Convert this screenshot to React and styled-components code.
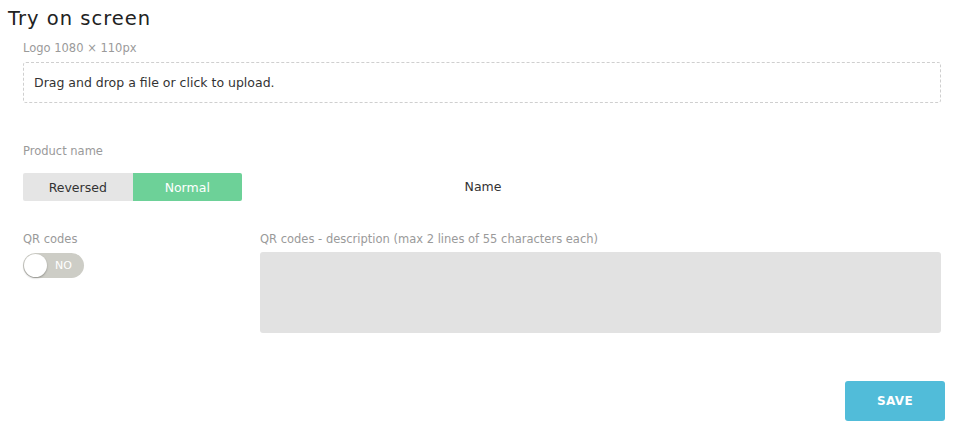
import styled, { createGlobalStyle } from "styled-components";

const GlobalStyle = createGlobalStyle`
    body {
        margin: 0;
        background: #fff;
        font-family: "DejaVu Sans", "Open Sans", sans-serif;
        color: #333;
    }
`

export default function App(){
    return(
        <Page>
            <GlobalStyle />
            <Title>Try on screen</Title>
            <Content>
                <Field>
                    <Label>Logo 1080 × 110px</Label>
                    <DropZone>Drag and drop a file or click to upload.</DropZone>
                </Field>

                <ProductRow>
                    <Field>
                        <Label>Product name</Label>
                        <Segmented>
                            <Segment>Reversed</Segment>
                            <Segment active>Normal</Segment>
                        </Segmented>
                    </Field>
                    <NamePreview>Name</NamePreview>
                </ProductRow>

                <QrRow>
                    <Field>
                        <Label>QR codes</Label>
                        <Toggle>
                            <Knob />
                            <ToggleText>NO</ToggleText>
                        </Toggle>
                    </Field>
                    <Field>
                        <Label>QR codes - description (max 2 lines of 55 characters each)</Label>
                        <TextArea />
                    </Field>
                </QrRow>

                <Footer>
                    <SaveButton>SAVE</SaveButton>
                </Footer>
            </Content>
        </Page>
    )
}

const Page = styled.div`
    width: 969px;
    height: 432px;
    box-sizing: border-box;
    padding: 7px 0 0 8px;
`

const Title = styled.h1`
    margin: 0;
    font-size: 19.5px;
    font-weight: 400;
    letter-spacing: 1px;
    color: #222;
    line-height: 24px;
`

const Content = styled.div`
    display: flex;
    flex-direction: column;
    padding: 10px 28px 0 15px;
`

const Field = styled.div`
    display: flex;
    flex-direction: column;
`

const Label = styled.div`
    font-size: 11.5px;
    color: #9a9a9a;
    line-height: 14px;
    margin-bottom: 7px;
`

const DropZone = styled.div`
    height: 41px;
    box-sizing: border-box;
    border: 1px dashed #cfcfcf;
    border-radius: 3px;
    display: flex;
    align-items: center;
    padding-left: 10px;
    font-size: 12.5px;
    color: #333;
`

const ProductRow = styled.div`
    display: grid;
    grid-template-columns: 219px 482px;
    align-items: end;
    margin-top: 41px;
`

const Segmented = styled.div`
    display: flex;
    width: 219px;
    height: 28px;
    margin-top: 8px;
    border-radius: 2px;
    overflow: hidden;
`

const Segment = styled.div`
    flex: 1;
    display: flex;
    align-items: center;
    justify-content: center;
    font-size: 12.5px;
    background: ${p => p.active ? "#6dd198" : "#e5e5e5"};
    color: ${p => p.active ? "#fff" : "#333"};
`

const NamePreview = styled.div`
    height: 28px;
    display: flex;
    align-items: center;
    justify-content: center;
    font-size: 12.5px;
    color: #333;
    padding-bottom: 2px;
    box-sizing: border-box;
`

const QrRow = styled.div`
    display: grid;
    grid-template-columns: 237px 1fr;
    margin-top: 31px;
`

const Toggle = styled.div`
    position: relative;
    width: 61px;
    height: 25px;
    border-radius: 13px;
    background: #cdcdc6;
    display: flex;
    align-items: center;
    justify-content: flex-end;
    padding-right: 12px;
    box-sizing: border-box;
`

const Knob = styled.div`
    position: absolute;
    left: 1px;
    top: 1px;
    width: 23px;
    height: 23px;
    border-radius: 50%;
    background: #fff;
    box-shadow: 0 1px 2px rgba(0,0,0,0.3);
`

const ToggleText = styled.span`
    font-size: 11px;
    color: #fff;
`

const TextArea = styled.div`
    height: 81px;
    background: #e2e2e2;
    border-radius: 3px;
    margin-top: -1px;
`

const Footer = styled.div`
    display: flex;
    justify-content: flex-end;
    margin-top: 48px;
    margin-right: -4px;
`

const SaveButton = styled.button`
    width: 100px;
    height: 40px;
    border: none;
    border-radius: 3px;
    background: #51bcd9;
    color: #fff;
    font-family: inherit;
    font-size: 12px;
    font-weight: 700;
    letter-spacing: 0.3px;
`
